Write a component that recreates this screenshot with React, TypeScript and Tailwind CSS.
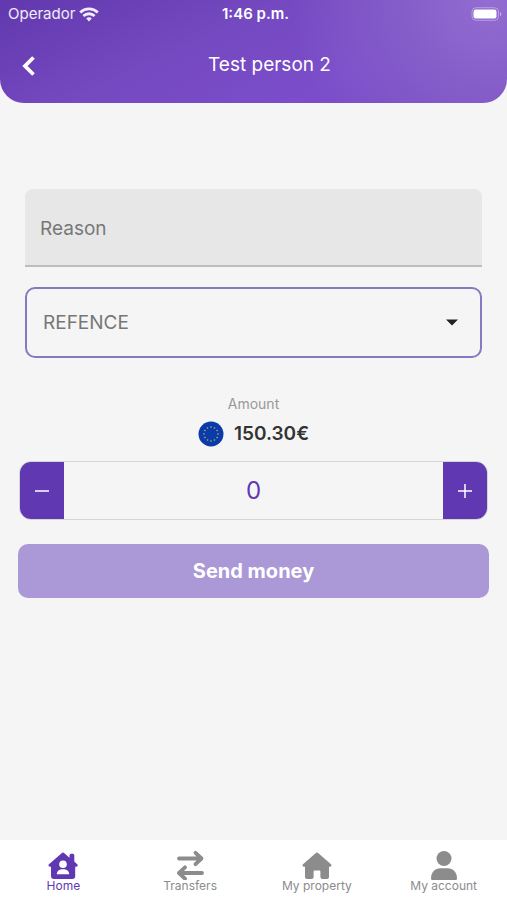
import { useState } from 'react';

// ============ ICONS ============
function WifiIcon() {
  return (
    <svg width="20" height="15" viewBox="0 0 20 15" fill="none" stroke="currentColor" strokeWidth="2.8" aria-hidden="true">
      <path d="M1.2 5.4C6.2 .7 13.8 .7 18.8 5.4" />
      <path d="M4.4 9C7.6 6 12.4 6 15.6 9" />
      <path d="M7.2 11.4C8.8 10 11.2 10 12.8 11.4L10 14.4Z" fill="currentColor" stroke="none" />
    </svg>
  );
}

function BatteryIcon() {
  return (
    <svg width="32" height="14" viewBox="0 0 32 14" fill="none" aria-hidden="true">
      <rect x="1" y=".7" width="26.5" height="12.6" rx="4" stroke="#fff" strokeOpacity=".35" />
      <rect x="2.5" y="2.5" width="23" height="9" rx="2.2" fill="#fff" />
      <path d="M29 5v4c1.8-.7 1.8-3.3 0-4z" fill="#fff" fillOpacity=".5" />
    </svg>
  );
}

function EuroFlag() {
  return (
    <svg width="26" height="26" viewBox="0 0 26 26" aria-hidden="true">
      <circle cx="13" cy="13" r="12.5" fill="#0a3ba8" />
      {Array.from({ length: 12 }, (_, i) => {
        const angle = (i * Math.PI) / 6;
        return <circle key={i} cx={13 + 7 * Math.sin(angle)} cy={13 - 7 * Math.cos(angle)} r=".8" fill="#b9b36b" />;
      })}
    </svg>
  );
}

function HomeIcon() {
  return (
    <svg width="30" height="30" viewBox="0 0 30 30" fill="currentColor" aria-hidden="true">
      <path d="M13.6 3.2a2.1 2.1 0 0 1 2.8 0l5.1 4.500V5.400c0-1 .8-1.700 1.700-1.700h1.400c1 0 1.700.700 1.700 1.700v6.200l2.900 2.600c1.100 1 .4 2.600-1 2.600h-1v9.200a3 3 0 0 1-3 3H6a3 3 0 0 1-3-3v-9.200H2c-1.400 0-2.100-1.600-1-2.600z" />
      <circle cx="15" cy="14.300" r="3.800" fill="#fff" />
      <path d="M8.800 24.300c0-3.300 2.400-5.100 6.200-5.100s6.200 1.800 6.200 5.100z" fill="#fff" />
    </svg>
  );
}

function TransfersIcon() {
  return (
    <svg width="30" height="30" viewBox="0 0 30 30" fill="none" stroke="currentColor" strokeWidth="3.800" strokeLinecap="round" strokeLinejoin="round" aria-hidden="true">
      <path d="M4 8.500h22.500M20.500 2.800l6 5.700-6 5.700" />
      <path d="M27 23H4M10 17.300L4 23l6 5.700" />
    </svg>
  );
}

function PropertyIcon() {
  return (
    <svg width="30" height="30" viewBox="0 0 30 30" fill="currentColor" aria-hidden="true">
      <path d="M13.600 3.200a2.100 2.100 0 0 1 2.800 0l12.600 11c1.100 1 .4 2.600-1 2.600h-1v10.200a2 2 0 0 1-2 2h-4.600a2 2 0 0 1-2-2v-5.400a1.200 1.200 0 0 0-1.200-1.200h-4.400a1.200 1.200 0 0 0-1.200 1.200v5.400a2 2 0 0 1-2 2H5a2 2 0 0 1-2-2V16.800H2c-1.400 0-2.100-1.600-1-2.600z" />
    </svg>
  );
}

function AccountIcon() {
  return (
    <svg width="30" height="30" viewBox="0 0 30 30" fill="currentColor" aria-hidden="true">
      <circle cx="15" cy="8.500" r="7.500" />
      <path d="M2 28.400C2 22 6 18.200 11.500 18.200h7C24 18.200 28 22 28 28.400c0 1-.700 1.600-1.600 1.600H3.600C2.700 30 2 29.400 2 28.400z" />
    </svg>
  );
}

const tabs = [
  { label: 'Home', icon: HomeIcon },
  { label: 'Transfers', icon: TransfersIcon },
  { label: 'My property', icon: PropertyIcon },
  { label: 'My account', icon: AccountIcon },
];

export default function App() {
  const [reason, setReason] = useState('');
  const [reference, setReference] = useState('');
  const [amount, setAmount] = useState('0');
  const [activeTab, setActiveTab] = useState('Home');

  const changeAmount = (step: number) => {
    setAmount((prev) => String(Math.max(0, (Number(prev) || 0) + step)));
  };

  return (
    <div className="flex min-h-screen flex-col bg-[#f5f5f5] font-['Inter',sans-serif]">
      {/* Header */}
      <header className="rounded-b-3xl bg-[radial-gradient(circle_at_97%_0%,#936dd1_0%,#855dc9_18%,transparent_40%),linear-gradient(155deg,#6238ae_0%,#7549c0_40%,#7b4dcb_70%,#7849c2_100%)] text-white">
        <div className="grid h-7 grid-cols-3 items-center pr-1 pl-2 text-[15px]">
          <div className="flex items-center gap-1 text-white/90">
            <span>Operador</span>
            <WifiIcon />
          </div>
          <time className="text-center font-semibold">1:46 p.m.</time>
          <div className="flex justify-end">
            <BatteryIcon />
          </div>
        </div>
        <div className="grid h-[75px] grid-cols-[56px_1fr_24px] items-center">
          <button type="button" aria-label="Back" className="flex h-12 items-center justify-center">
            <svg width="16" height="22" viewBox="0 0 16 22" fill="none" stroke="currentColor" strokeWidth="3.800" aria-hidden="true">
              <path d="M13.500 2.500 5 11l8.500 8.500" />
            </svg>
          </button>
          <h1 className="text-center text-[19px]">Test person 2</h1>
        </div>
      </header>

      {/* Form */}
      <form className="flex flex-1 flex-col px-[18px] pt-[86px]" onSubmit={(e) => e.preventDefault()}>
        <div className="flex flex-col gap-5 px-[7px]">
          <input
            type="text"
            aria-label="Reason"
            placeholder="Reason"
            value={reason}
            onChange={(e) => setReason(e.target.value)}
            className="h-[78px] w-full rounded-t-lg border-b-2 border-[#bdbdbd] bg-[#e7e7e7] px-[15px] pt-0.5 text-[19px] text-[#333333] outline-none placeholder:text-[#777777]"
          />
          <div className="relative">
            <select
              aria-label="Reference"
              value={reference}
              onChange={(e) => setReference(e.target.value)}
              className="h-[71px] w-full appearance-none rounded-[10px] border-2 border-[#8878c2] bg-[#f5f5f5] px-4 pt-0.5 text-[19px] text-[#777777] outline-none"
            >
              <option value="">REFENCE</option>
            </select>
            <svg className="pointer-events-none absolute top-8 right-6" width="12" height="7" viewBox="0 0 12 7" fill="#222222" aria-hidden="true">
              <path d="M0 .5h12L6 6.500z" />
            </svg>
          </div>
        </div>

        {/* Balance */}
        <div className="mt-9 flex flex-col items-center">
          <label htmlFor="amount" className="text-sm text-[#999999]">Amount</label>
          <div className="mt-0.5 flex h-9 items-center gap-2.5">
            <EuroFlag />
            <span className="text-[19px] font-semibold text-[#333333]">150.30€</span>
          </div>
        </div>

        {/* Amount stepper */}
        <div className="mx-px mt-[9px] flex h-[59px] overflow-hidden rounded-xl border border-[#d5d5d5]">
          <button type="button" aria-label="Decrease" onClick={() => changeAmount(-1)} className="flex w-11 shrink-0 items-center justify-center bg-[#6038b2] text-white">
            <svg width="14" height="14" viewBox="0 0 14 14" stroke="currentColor" strokeWidth="1.500" aria-hidden="true">
              <path d="M0 7h14" />
            </svg>
          </button>
          <input
            id="amount"
            type="text"
            inputMode="decimal"
            value={amount}
            onChange={(e) => setAmount(e.target.value)}
            className="min-w-0 flex-1 bg-transparent text-center text-2xl text-[#6038b2] outline-none"
          />
          <button type="button" aria-label="Increase" onClick={() => changeAmount(1)} className="flex w-11 shrink-0 items-center justify-center bg-[#6038b2] text-white">
            <svg width="14" height="14" viewBox="0 0 14 14" stroke="currentColor" strokeWidth="1.500" aria-hidden="true">
              <path d="M0 7h14M7 0v14" />
            </svg>
          </button>
        </div>

        <button type="submit" className="mt-6 h-[54px] rounded-[10px] bg-[#ab98d7] text-xl font-bold text-white">
          Send money
        </button>
      </form>

      {/* Bottom tabs */}
      <nav className="grid h-15 grid-cols-4 bg-white">
        {tabs.map(({ label, icon: Icon }) => (
          <button
            key={label}
            type="button"
            onClick={() => setActiveTab(label)}
            className={`flex flex-col items-center pt-2.5 text-xs leading-3 ${activeTab === label ? 'text-[#6038b2]' : 'text-[#8c8c8c]'}`}
          >
            <Icon />
            <span>{label}</span>
          </button>
        ))}
      </nav>
    </div>
  );
}
